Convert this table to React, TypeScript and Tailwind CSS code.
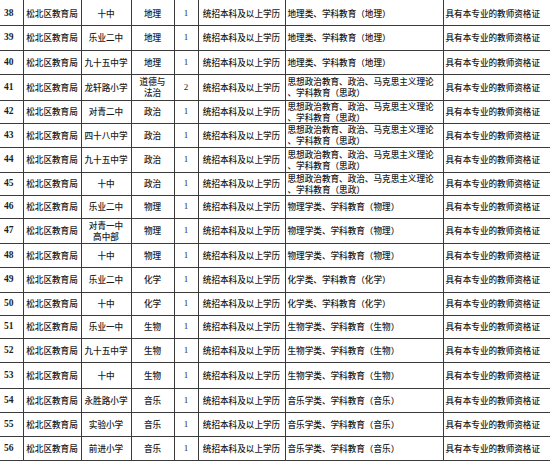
import React from 'react';

type Row = {
  no: number;
  school: string[];
  subject: string[];
  count: string;
  major: string[];
  h: string;
};

const zheng = ['思想政治教育、政治、马克思主义理论', '、学科教育（思政）'];

const rows: Row[] = [
  { no: 38, school: ['十中'], subject: ['地理'], count: '1', major: ['地理类、学科教育（地理）'], h: 'h-[25px]' },
  { no: 39, school: ['乐业二中'], subject: ['地理'], count: '1', major: ['地理类、学科教育（地理）'], h: 'h-[25px]' },
  { no: 40, school: ['九十五中学'], subject: ['地理'], count: '1', major: ['地理类、学科教育（地理）'], h: 'h-[24px]' },
  { no: 41, school: ['龙轩路小学'], subject: ['道德与', '法治'], count: '2', major: zheng, h: 'h-[26px]' },
  { no: 42, school: ['对青二中'], subject: ['政治'], count: '1', major: zheng, h: 'h-[23px]' },
  { no: 43, school: ['四十八中学'], subject: ['政治'], count: '1', major: zheng, h: 'h-[24px]' },
  { no: 44, school: ['九十五中学'], subject: ['政治'], count: '1', major: zheng, h: 'h-[25px]' },
  { no: 45, school: ['十中'], subject: ['政治'], count: '1', major: zheng, h: 'h-[23px]' },
  { no: 46, school: ['乐业二中'], subject: ['物理'], count: '1', major: ['物理学类、学科教育（物理）'], h: 'h-[23px]' },
  { no: 47, school: ['对青一中', '高中部'], subject: ['物理'], count: '1', major: ['物理学类、学科教育（物理）'], h: 'h-[25px]' },
  { no: 48, school: ['十中'], subject: ['物理'], count: '1', major: ['物理学类、学科教育（物理）'], h: 'h-[24px]' },
  { no: 49, school: ['乐业二中'], subject: ['化学'], count: '1', major: ['化学类、学科教育（化学）'], h: 'h-[25px]' },
  { no: 50, school: ['十中'], subject: ['化学'], count: '1', major: ['化学类、学科教育（化学）'], h: 'h-[23px]' },
  { no: 51, school: ['乐业一中'], subject: ['生物'], count: '1', major: ['生物学类、学科教育（生物）'], h: 'h-[23px]' },
  { no: 52, school: ['九十五中学'], subject: ['生物'], count: '1', major: ['生物学类、学科教育（生物）'], h: 'h-[24px]' },
  { no: 53, school: ['十中'], subject: ['生物'], count: '1', major: ['生物学类、学科教育（生物）'], h: 'h-[26px]' },
  { no: 54, school: ['永胜路小学'], subject: ['音乐'], count: '1', major: ['音乐学类、学科教育（音乐）'], h: 'h-[24px]' },
  { no: 55, school: ['实验小学'], subject: ['音乐'], count: '1', major: ['音乐学类、学科教育（音乐）'], h: 'h-[24px]' },
  { no: 56, school: ['前进小学'], subject: ['音乐'], count: '1', major: ['音乐学类、学科教育（音乐）'], h: 'h-[24px]' },
];

const cell = 'border border-[#3a3a3a] p-0 align-middle';

const Lines: React.FC<{ lines: string[] }> = ({ lines }) => (
  <>
    {lines.map((l, i) => (
      <div key={i}>{l}</div>
    ))}
  </>
);

const App: React.FC = () => {
  return (
    <div className="w-[550px] h-[463px] overflow-hidden bg-white">
      <table
        className="table-fixed border-collapse w-[551px] text-[8.6px] leading-[11px] font-medium text-[#1c1c1c]"
        style={{ fontFamily: '"Noto Sans CJK SC", "Noto Sans", sans-serif' }}
      >
        <colgroup>
          <col className="w-[23px]" />
          <col className="w-[58px]" />
          <col className="w-[50px]" />
          <col className="w-[43px]" />
          <col className="w-[24px]" />
          <col className="w-[87px]" />
          <col className="w-[158px]" />
          <col className="w-[108px]" />
        </colgroup>
        <tbody>
          {rows.map((r, idx) => {
            const top = idx === 0 ? 'border-t-0 pt-[3px]' : '';
            return (
              <tr key={r.no} className={r.h}>
                <td
                  className={`${cell} ${top} border-l-0 text-center pr-[5px] font-bold text-[9.5px]`}
                  style={{ fontFamily: '"Liberation Serif", serif' }}
                >
                  {r.no}
                </td>
                <td className={`${cell} ${top} text-center`}>松北区教育局</td>
                <td className={`${cell} ${top} text-center`}>
                  <Lines lines={r.school} />
                </td>
                <td className={`${cell} ${top} text-center`}>
                  <Lines lines={r.subject} />
                </td>
                <td
                  className={`${cell} ${top} text-center text-[9px] font-normal`}
                  style={{ fontFamily: '"Liberation Serif", serif' }}
                >
                  {r.count}
                </td>
                <td className={`${cell} ${top} text-center whitespace-nowrap`}>统招本科及以上学历</td>
                <td className={`${cell} ${top} pl-[2px] whitespace-nowrap`}>
                  <Lines lines={r.major} />
                </td>
                <td className={`${cell} ${top} border-r-0 pl-[2px] whitespace-nowrap`}>具有本专业的教师资格证</td>
              </tr>
            );
          })}
        </tbody>
      </table>
    </div>
  );
};

export default App;
